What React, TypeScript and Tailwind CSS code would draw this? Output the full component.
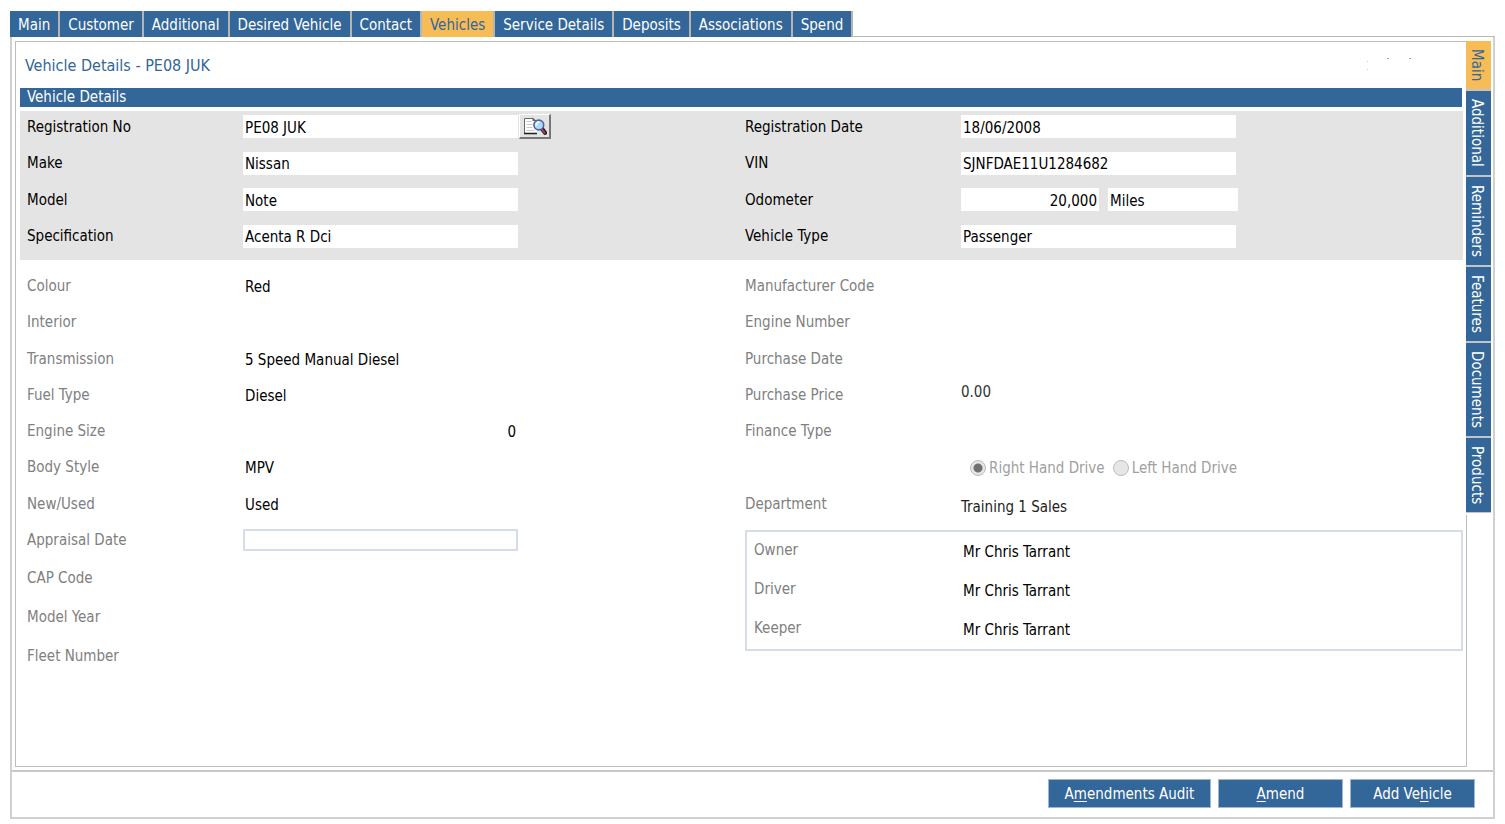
import React, { useState } from "react";
import clsx from "clsx";

const topTabs = [
  "Main",
  "Customer",
  "Additional",
  "Desired Vehicle",
  "Contact",
  "Vehicles",
  "Service Details",
  "Deposits",
  "Associations",
  "Spend",
];

const sideTabs = ["Main", "Additional", "Reminders", "Features", "Documents", "Products"];

type FieldProps = {
  id: string;
  label: string;
  value?: string;
  boxed?: boolean;
  alignRight?: boolean;
  children?: React.ReactNode;
};

function Field({ id, label, value = "", boxed, alignRight, children }: FieldProps) {
  return (
    <div className="flex items-center">
      <label htmlFor={id} className={clsx("w-[216px] shrink-0", boxed ? "text-black" : "text-[#808080]")}>
        {label}
      </label>
      {children ?? (
        <input
          id={id}
          readOnly
          defaultValue={value}
          className={clsx(
            "h-[23px] w-[275px] px-[2px] pt-[2px] text-black outline-none",
            boxed ? "bg-white" : "bg-transparent",
            alignRight && "text-right",
          )}
        />
      )}
    </div>
  );
}

function LookupIcon() {
  return (
    <svg width="24" height="18" viewBox="0 0 24 18" aria-hidden="true">
      <path d="M1.5 1H11l3 3V16.5H1.5Z" fill="#fff" />
      <path d="M1.5 16V1.5H10.5" fill="none" stroke="#6a6a6a" strokeWidth="1" />
      <path d="M1 16.5H14" stroke="#222" strokeWidth="1.6" />
      <path d="M9.5 0.5l4.5 3.5H9.5Z" fill="#666" />
      <path d="M3.5 4.5h5M3.5 7.5h6M3.5 10.5h6M3.5 13.5h8" stroke="#c8c8c8" />
      <path d="M19 11.8l3 4" stroke="#2b1a3c" strokeWidth="4.2" strokeLinecap="round" />
      <path d="M19.5 13l2 2.6" stroke="#a8443c" strokeWidth="2" strokeLinecap="round" />
      <circle cx="15.8" cy="8" r="4.9" fill="#a9dcfa" stroke="#5560a8" strokeWidth="1.6" />
      <path d="M13 8.6c.2-2.2 1.2-3.4 3.2-3.8" fill="none" stroke="#fff" strokeWidth="1.6" />
    </svg>
  );
}

function ActionButton({ before, accessKey, after, className }: { before: string; accessKey: string; after: string; className: string }) {
  return (
    <button
      type="button"
      className={clsx(
        "h-[29px] border border-[#9db8d2] bg-[#336699] text-center text-white",
        className,
      )}
    >
      {before}
      <span className="underline underline-offset-2">{accessKey}</span>
      {after}
    </button>
  );
}

const person = "Mr Chris Tarrant";

export default function App() {
  const [tab, setTab] = useState("Vehicles");
  const [sideTab, setSideTab] = useState("Main");

  return (
    <div className="flex min-h-screen flex-col bg-white px-[10px] pt-[11px] pb-[5px] font-['DejaVu_Sans_Condensed','DejaVu_Sans',sans-serif] text-[15px] leading-[18px] text-black">
      <nav className="flex" aria-label="Customer record">
        {topTabs.map((name) => (
          <button
            key={name}
            type="button"
            onClick={() => setTab(name)}
            className={clsx(
              "h-[26px] border-r-2 border-[#b4b4b4] px-2 pt-px whitespace-nowrap",
              tab === name ? "bg-[#f7bc55] text-[#336699]" : "bg-[#336699] text-white",
            )}
          >
            {name}
          </button>
        ))}
        <div className="flex-1 border-b border-[#b8b8b8]" />
      </nav>

      <div className="flex flex-1 flex-col border-r-2 border-b-2 border-l-2 border-[#d0d0d0]">
        <main className="flex flex-1 pt-1 pr-[2px] pb-[3px] pl-[3px]">
          <section className="flex flex-1 flex-col border-y border-l border-[#bdbdbd] pl-1">
            <header className="flex h-[46px] items-center justify-between pl-[5px]">
              <h1 className="pt-[2px] text-[16px] text-[#336699]">Vehicle Details - PE08 JUK</h1>
              <svg width="50" height="16" viewBox="0 0 50 16" className="mr-[49px]" aria-hidden="true">
                <path d="M20 1.5h2M42 1.5h2" stroke="#8fa9c6" />
                <path d="M0 4.5h1M0 12.5h1" stroke="#ccc" />
              </svg>
            </header>
            <div className="pr-1">
              <h2 className="h-[19px] bg-[#336699] pl-[7px] leading-[19px] text-white">Vehicle Details</h2>
            </div>

            <div className="mt-1 mr-[3px] grid min-h-[149px] grid-cols-2 bg-[#e4e4e4] pt-1 pb-3 pl-[7px]">
              <div className="flex flex-col justify-between">
                <Field id="reg-no" label="Registration No" boxed>
                  <div className="flex h-[23px] items-center">
                    <input
                      id="reg-no"
                      readOnly
                      defaultValue="PE08 JUK"
                      className="h-[23px] w-[275px] bg-white px-[2px] pt-[2px] outline-none"
                    />
                    <button
                      type="button"
                      aria-label="Look up vehicle"
                      className="ml-px flex h-[25px] w-8 items-center justify-center border-t border-r-2 border-b-2 border-l border-t-white border-r-[#777] border-b-[#777] border-l-white bg-[#e4e4e4]"
                    >
                      <LookupIcon />
                    </button>
                  </div>
                </Field>
                <Field id="make" label="Make" value="Nissan" boxed />
                <Field id="model" label="Model" value="Note" boxed />
                <Field id="spec" label="Specification" value="Acenta R Dci" boxed />
              </div>
              <div className="flex flex-col justify-between">
                <Field id="reg-date" label="Registration Date" value="18/06/2008" boxed />
                <Field id="vin" label="VIN" value="SJNFDAE11U1284682" boxed />
                <Field id="odometer" label="Odometer" boxed>
                  <input
                    id="odometer"
                    readOnly
                    defaultValue="20,000"
                    className="h-[23px] w-[138px] bg-white px-[2px] pt-[2px] text-right outline-none"
                  />
                  <input
                    aria-label="Odometer unit"
                    readOnly
                    defaultValue="Miles"
                    className="ml-[9px] h-[23px] w-[130px] bg-white px-[2px] pt-[2px] outline-none"
                  />
                </Field>
                <Field id="vehicle-type" label="Vehicle Type" value="Passenger" boxed />
              </div>
            </div>

            <div className="mt-2 mr-[3px] grid grid-cols-2 items-start pl-[7px]">
              <div>
                <div className="grid min-h-[290px] grid-rows-8">
                  <Field id="colour" label="Colour" value="Red" />
                  <Field id="interior" label="Interior" />
                  <Field id="transmission" label="Transmission" value="5 Speed Manual Diesel" />
                  <Field id="fuel" label="Fuel Type" value="Diesel" />
                  <Field id="engine-size" label="Engine Size" value="0" alignRight />
                  <Field id="body" label="Body Style" value="MPV" />
                  <Field id="new-used" label="New/Used" value="Used" />
                  <Field id="appraisal" label="Appraisal Date">
                    <input
                      id="appraisal"
                      type="text"
                      className="h-[22px] w-[275px] border-2 border-[#d6dde8] bg-white px-1 outline-none"
                    />
                  </Field>
                </div>
                <div className="grid grid-rows-3 [&>*]:h-[39px]">
                  <Field id="cap" label="CAP Code" />
                  <Field id="model-year" label="Model Year" />
                  <Field id="fleet" label="Fleet Number" />
                </div>
              </div>

              <div>
                <div className="grid min-h-[254px] grid-rows-7">
                  <Field id="manufacturer" label="Manufacturer Code" />
                  <Field id="engine-number" label="Engine Number" />
                  <Field id="purchase-date" label="Purchase Date" />
                  <Field id="purchase-price" label="Purchase Price">
                    <output id="purchase-price" className="pb-[5px] text-[#333]">0.00</output>
                  </Field>
                  <Field id="finance" label="Finance Type" />
                  <div className="flex items-center gap-2 pl-[225px] text-[#a0a0a0]">
                    {["Right Hand Drive", "Left Hand Drive"].map((side, i) => (
                      <label key={side} className="flex items-center gap-[3px] whitespace-nowrap">
                        <input
                          type="radio"
                          name="drive"
                          disabled
                          defaultChecked={i === 0}
                          className="size-4 appearance-none rounded-full border border-[#bcbcbc] bg-[#e6e6e6] checked:bg-[radial-gradient(circle,#707070_0_4px,#e6e6e6_5px)]"
                        />
                        {side}
                      </label>
                    ))}
                  </div>
                  <Field id="department" label="Department">
                    <output id="department" className="pt-[6px] text-[#222]">Training 1 Sales</output>
                  </Field>
                </div>
                <div className="mt-[8px] border-2 border-[#d6dde8] pl-[7px]">
                  {["Owner", "Driver", "Keeper"].map((role) => (
                    <div key={role} className="flex h-[39px] items-center">
                      <label htmlFor={role} className="w-[207px] shrink-0 pb-[3px] text-[#808080]">
                        {role}
                      </label>
                      <input
                        id={role}
                        readOnly
                        defaultValue={person}
                        className="h-[23px] w-[275px] bg-transparent px-[2px] pt-px outline-none"
                      />
                    </div>
                  ))}
                </div>
              </div>
            </div>
          </section>

          <aside className="flex w-[25px] flex-col">
            <nav className="flex flex-col gap-[2px] bg-[#c4c4c8] pb-px" aria-label="Vehicle">
              {sideTabs.map((name) => (
                <button
                  key={name}
                  type="button"
                  onClick={() => setSideTab(name)}
                  className={clsx(
                    "flex w-[25px] items-center pt-[8px] pr-[3px] pb-[8px] whitespace-nowrap [writing-mode:vertical-rl]",
                    sideTab === name ? "bg-[#f7bc55] text-[#336699]" : "bg-[#336699] text-white",
                  )}
                >
                  <span className="flex-1 leading-[22px]">{name}</span>
                </button>
              ))}
            </nav>
            <div className="mt-[2px] flex-1 border-l border-[#bdbdbd]" />
          </aside>
        </main>

        <footer className="flex h-[47px] items-start justify-end gap-[7px] border-t-2 border-[#c8c8c8] pt-[7px] pr-[18px]">
          <ActionButton before="A" accessKey="m" after="endments Audit" className="w-[163px]" />
          <ActionButton before="" accessKey="A" after="mend" className="w-[125px]" />
          <ActionButton before="Add Ve" accessKey="h" after="icle" className="w-[125px]" />
        </footer>
      </div>
    </div>
  );
}
